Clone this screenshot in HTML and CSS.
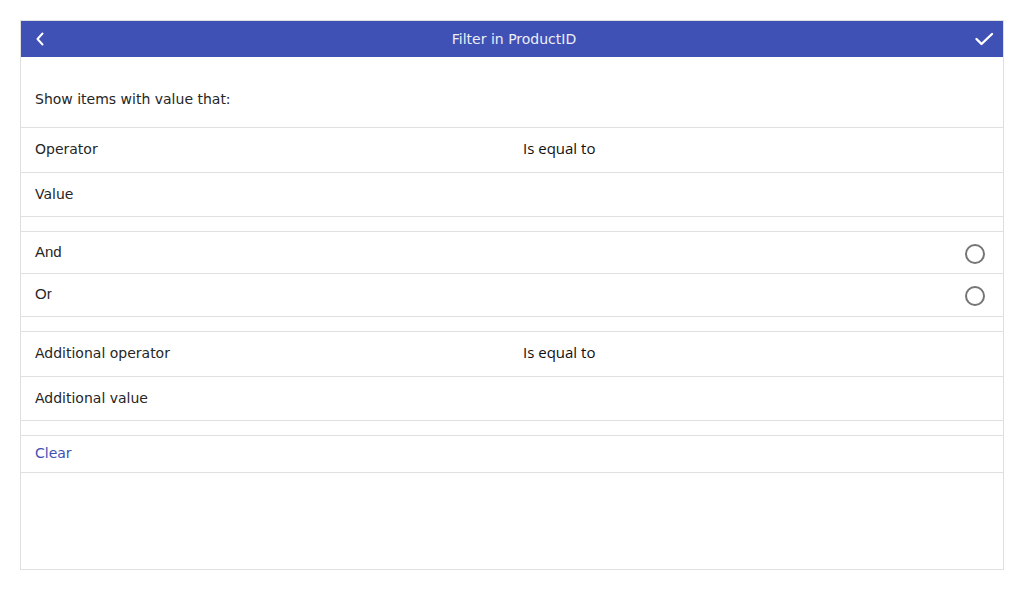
FILE: index.html
```html
<!DOCTYPE html>
<html>
<head>
<meta charset="utf-8">
<link rel="stylesheet" href="styles.css">
</head>
<body>
<div class="panel">
  <div class="header">
    <span class="hbtn back">
      <svg width="12" height="16" viewBox="0 0 12 16"><path d="M8.5 2.5 L3.5 8 L8.5 13.5" fill="none" stroke="#fff" stroke-width="2" stroke-linecap="round" stroke-linejoin="round"/></svg>
    </span>
    <span class="title">Filter in ProductID</span>
    <span class="hbtn ok">
      <svg width="20" height="16" viewBox="0 0 20 16"><path d="M2.5 8 L7.5 13 L18 3" fill="none" stroke="#fff" stroke-width="2.4" stroke-linecap="round" stroke-linejoin="round"/></svg>
    </span>
  </div>
  <div class="intro">Show items with value that:</div>
  <div class="row h45"><span class="label">Operator</span><span class="val">Is equal to</span></div>
  <div class="row h44"><span class="label">Value</span><span class="val"></span></div>
  <div class="spacer"></div>
  <div class="row h42"><span class="label alt">And</span><span class="radio"></span></div>
  <div class="row h43"><span class="label alt">Or</span><span class="radio"></span></div>
  <div class="spacer"></div>
  <div class="row h45"><span class="label">Additional operator</span><span class="val">Is equal to</span></div>
  <div class="row h44"><span class="label">Additional value</span><span class="val"></span></div>
  <div class="spacer"></div>
  <div class="row h37"><span class="label link">Clear</span></div>
</div>
</body>
</html>
```
FILE: styles.css
```css
* { box-sizing: border-box; }
html, body { margin: 0; padding: 0; background: #fff; }
body { font-family: "DejaVu Sans", sans-serif; font-size: 14px; color: #262626; }
.panel {
  margin: 20px 0 0 20px;
  width: 984px;
  height: 550px;
  border: 1px solid #e0e0e0;
  display: flex;
  flex-direction: column;
}
.header {
  height: 36px;
  flex: none;
  background: #3f51b5;
  display: flex;
  align-items: center;
  padding: 0 9px 0 13px;
}
.title {
  flex: 1;
  text-align: center;
  color: #eceef8;
  font-size: 14px;
  line-height: 16px;
}
.hbtn { display: flex; align-items: center; width: 24px; height: 24px; }
.back { justify-content: flex-start; }
.ok { justify-content: flex-end; }
.intro {
  flex: none;
  height: 71px;
  padding: 34px 14px 0;
  line-height: 16px;
  border-bottom: 1px solid #e0e0e0;
}
.row {
  flex: none;
  display: flex;
  align-items: center;
  padding: 0 18px 2px 14px;
  border-bottom: 1px solid #e0e0e0;
}
.h45 { height: 45px; }
.h44 { height: 44px; }
.h43 { height: 43px; }
.h42 { height: 42px; }
.h37 { height: 37px; }
.spacer { flex: none; height: 15px; border-bottom: 1px solid #e0e0e0; }
.label { width: 477px; flex: none; line-height: 16px; }
.label.alt { font-family: "Liberation Sans", Arial, sans-serif; font-size: 15px; flex: 1; }
.label.link { color: #3f51b5; }
.val {
  flex: 1;
  padding: 0 0 2px 11px;
  font-family: "Open Sans", sans-serif;
  font-size: 15px;
  line-height: 16px;
  color: #111;
}
.radio {
  width: 20px;
  height: 20px;
  margin-top: 4px;
  border: 2px solid #757575;
  border-radius: 50%;
  flex: none;
}
```
